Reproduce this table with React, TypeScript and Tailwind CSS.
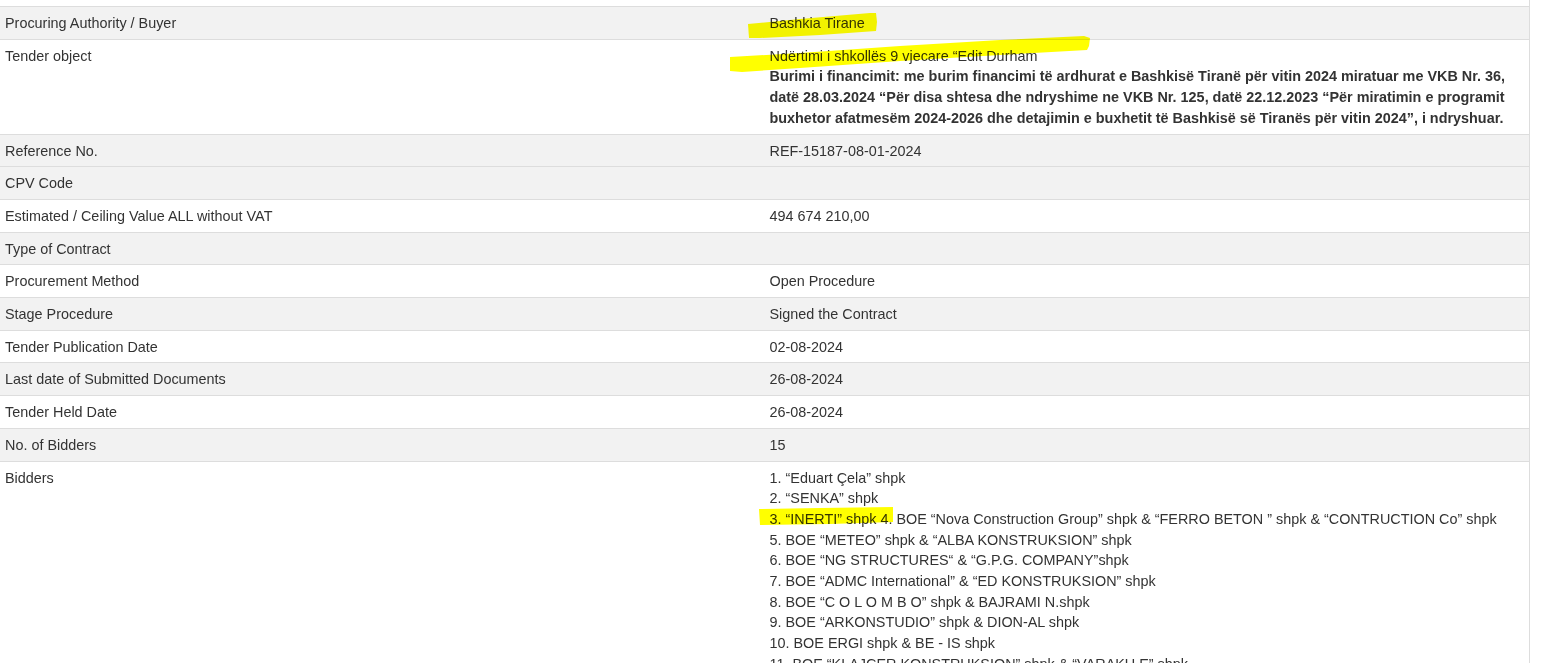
import React from 'react';

interface Row {
  label: string;
  value?: React.ReactNode;
  gray: boolean;
}

const bidders: string[] = [
  '1. “Eduart Çela” shpk',
  '2. “SENKA” shpk',
  '3. “INERTI” shpk 4. BOE “Nova Construction Group” shpk & “FERRO BETON ” shpk & “CONTRUCTION Co” shpk',
  '5. BOE “METEO” shpk & “ALBA KONSTRUKSION” shpk',
  '6. BOE “NG STRUCTURES“ & “G.P.G. COMPANY”shpk',
  '7. BOE “ADMC International” & “ED KONSTRUKSION” shpk',
  '8. BOE “C O L O M B O” shpk & BAJRAMI N.shpk',
  '9. BOE “ARKONSTUDIO” shpk & DION-AL shpk',
  '10. BOE ERGI shpk & BE - IS shpk',
  '11. BOE “KLAJCER KONSTRUKSION” shpk & “VARAKU E” shpk'
];

const rows: Row[] = [
  { label: 'Procuring Authority / Buyer', value: 'Bashkia Tirane', gray: true },
  {
    label: 'Tender object',
    gray: false,
    value: (
      <>
        <div>Ndërtimi i shkollës 9 vjecare “Edit Durham</div>
        <div className="font-bold">
          Burimi i financimit: me burim financimi të ardhurat e Bashkisë Tiranë për vitin 2024 miratuar me VKB Nr. 36, datë
          28.03.2024 “Për disa shtesa dhe ndryshime ne VKB Nr. 125, datë 22.12.2023 “Për miratimin e programit buxhetor
          afatmesëm 2024-2026 dhe detajimin e buxhetit të Bashkisë së Tiranës për vitin 2024”, i ndryshuar.
        </div>
      </>
    )
  },
  { label: 'Reference No.', value: 'REF-15187-08-01-2024', gray: true },
  { label: 'CPV Code', value: '', gray: true },
  { label: 'Estimated / Ceiling Value ALL without VAT', value: '494 674 210,00', gray: false },
  { label: 'Type of Contract', value: '', gray: true },
  { label: 'Procurement Method', value: 'Open Procedure', gray: false },
  { label: 'Stage Procedure', value: 'Signed the Contract', gray: true },
  { label: 'Tender Publication Date', value: '02-08-2024', gray: false },
  { label: 'Last date of Submitted Documents', value: '26-08-2024', gray: true },
  { label: 'Tender Held Date', value: '26-08-2024', gray: false },
  { label: 'No. of Bidders', value: '15', gray: true },
  {
    label: 'Bidders',
    gray: false,
    value: (
      <div>
        {bidders.map((b) => (
          <div key={b}>{b}</div>
        ))}
      </div>
    )
  }
];

// marker strokes drawn over the page
const Highlights: React.FC = () => (
  <svg
    className="pointer-events-none absolute left-0 top-0 mix-blend-multiply"
    width="1556"
    height="663"
    viewBox="0 0 1556 663"
  >
    <polygon
      fill="#ffff00"
      points="748,24 800,19 870,13 876,13 877,22 876,31 820,35 760,38 749,38"
    />
    <polygon
      fill="#ffff00"
      points="730,57 800,53 900,46 1000,40 1084,36 1090,38 1089,46 1087,50 1000,55 900,61 800,68 742,72 730,71"
    />
    <polygon fill="#ffff00" points="759,509 820,508 893,507 893,522 830,524 760,525" />
  </svg>
);

export default function App() {
  return (
    <div
      className="relative min-h-[663px] bg-white text-[14.4px] leading-[20.7px] text-[#333]"
      style={{ fontFamily: '"Liberation Sans", Arial, sans-serif' }}
    >
      <div className="w-[1530px] border-r border-[#ddd] min-h-[663px]">
        <div className="h-[6px]" />
        {rows.map((row) => (
          <div
            key={row.label}
            className={`grid grid-cols-2 border-t border-[#ddd] ${row.gray ? 'bg-[#f2f2f2]' : 'bg-white'}`}
          >
            <div className="px-[5px] pt-[6px] pb-[5px]">{row.label}</div>
            <div className="px-[5px] pt-[6px] pb-[5px]">{row.value}</div>
          </div>
        ))}
      </div>
      <Highlights />
    </div>
  );
}
